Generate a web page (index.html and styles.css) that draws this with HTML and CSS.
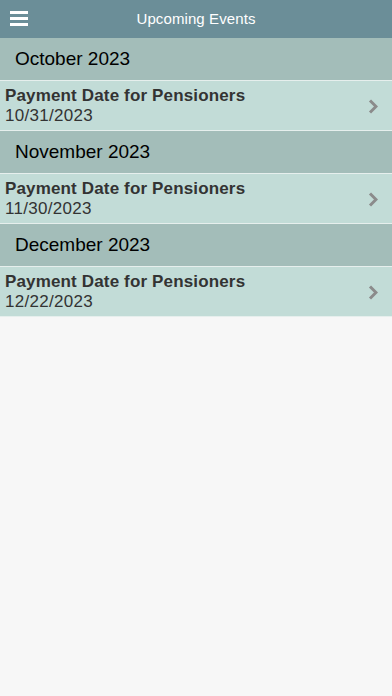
FILE: index.html
```html
<!DOCTYPE html>
<html>
<head>
<meta charset="utf-8">
<link rel="stylesheet" href="styles.css">
</head>
<body>
<header class="topbar">
  <button class="menu" aria-label="Menu">
    <svg width="18" height="16" viewBox="0 0 18 16"><rect x="0" y="1" width="18" height="3" fill="#fff"/><rect x="0" y="7" width="18" height="3" fill="#fff"/><rect x="0" y="13" width="18" height="3" fill="#fff"/></svg>
  </button>
  <h1 class="title">Upcoming Events</h1>
</header>
<main class="list">
  <div class="section">October 2023</div>
  <div class="row">
    <div class="row-text">
      <div class="row-title">Payment Date for Pensioners</div>
      <div class="row-date">10/31/2023</div>
    </div>
    <svg class="chev" width="10" height="15" viewBox="0 0 10 15"><path d="M2 1.5 L8 7.5 L2 13.5" fill="none" stroke="#8b8b8b" stroke-width="3"/></svg>
  </div>
  <div class="section">November 2023</div>
  <div class="row">
    <div class="row-text">
      <div class="row-title">Payment Date for Pensioners</div>
      <div class="row-date">11/30/2023</div>
    </div>
    <svg class="chev" width="10" height="15" viewBox="0 0 10 15"><path d="M2 1.5 L8 7.5 L2 13.5" fill="none" stroke="#8b8b8b" stroke-width="3"/></svg>
  </div>
  <div class="section">December 2023</div>
  <div class="row">
    <div class="row-text">
      <div class="row-title">Payment Date for Pensioners</div>
      <div class="row-date">12/22/2023</div>
    </div>
    <svg class="chev" width="10" height="15" viewBox="0 0 10 15"><path d="M2 1.5 L8 7.5 L2 13.5" fill="none" stroke="#8b8b8b" stroke-width="3"/></svg>
  </div>
</main>
</body>
</html>
```
FILE: styles.css
```css
html, body {
  margin: 0;
  padding: 0;
  background: #f7f7f7;
  font-family: "Liberation Sans", Arial, sans-serif;
  width: 392px;
  height: 696px;
}
.topbar {
  position: relative;
  height: 38px;
  background: #6b8e98;
  display: flex;
  align-items: center;
  justify-content: center;
}
.menu {
  position: absolute;
  left: 10px;
  top: 10px;
  padding: 0;
  border: 0;
  background: none;
  width: 18px;
  height: 16px;
  display: block;
}
.menu svg { display: block; }
.title {
  margin: 0;
  color: #fff;
  font-size: 15px;
  font-weight: normal;
  line-height: 36px;
  letter-spacing: 0.1px;
}
.section {
  height: 43px;
  box-sizing: border-box;
  border-bottom: 1px solid #e6efed;
  background: #a3bdb9;
  color: #000;
  font-size: 19px;
  line-height: 42px;
  padding-left: 15px;
}
.row {
  height: 50px;
  box-sizing: border-box;
  border-bottom: 1px solid #e6efed;
  background: #c2dcd7;
  display: flex;
  align-items: center;
  padding: 1px 14px 0 5px;
}
.row-text {
  flex: 1;
  color: #333;
}
.row-title {
  font-weight: bold;
  font-size: 17px;
  line-height: 20px;
  letter-spacing: 0.15px;
}
.row-date {
  font-size: 17px;
  line-height: 20px;
  letter-spacing: 0.3px;
}
.chev { display: block; }
```
